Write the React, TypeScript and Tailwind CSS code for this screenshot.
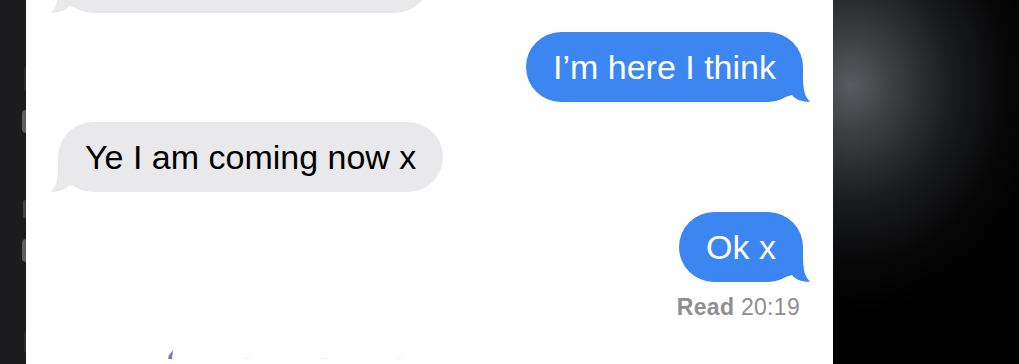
import React from "react";

function Tail({ side, color }: { side: "left" | "right"; color: string }) {
  return (
    <svg
      width="26"
      height="36"
      viewBox="0 0 26 36"
      className={
        side === "right"
          ? "absolute bottom-0 right-[-10px]"
          : "absolute bottom-0 left-[-10px] -scale-x-100"
      }
    >
      <path
        d="M0 0 L16 0 L16 10 C16 24 18 32 23.5 35.6 C18 36.3 9 34.5 5 29 L0 30.5 Z"
        fill={color}
      />
    </svg>
  );
}

function Incoming({ text, className = "" }: { text: string; className?: string }) {
  return (
    <div className={"relative self-start h-[70px] rounded-[35px] bg-[#e9e9eb] flex items-center pl-[27px] pr-[27px] " + className}>
      <span className="text-[34px] text-black leading-none">{text}</span>
      <Tail side="left" color="#e9e9eb" />
    </div>
  );
}

function Outgoing({ text, className = "" }: { text: string; className?: string }) {
  return (
    <div className={"relative self-end h-[70px] rounded-[35px] bg-[#3c86f1] flex items-center px-[27px] " + className}>
      <span className="text-[34px] text-white leading-none">{text}</span>
      <Tail side="right" color="#3c86f1" />
    </div>
  );
}

export default function App() {
  return (
    <div className="w-[1019px] h-[364px] flex overflow-hidden font-['Liberation_Sans',Arial,sans-serif]">
      <div className="w-[26px] h-full bg-[#1c1c1e] flex flex-col items-end">
        <div className="mt-[67px] w-[2px] h-[24px] rounded-full bg-[#2e2e30]" />
        <div className="mt-[19px] w-[4px] h-[23px] rounded-l-full bg-[#5f5f62]" />
        <div className="mt-[67px] w-[3px] h-[18px] rounded-full bg-[#444446]" />
        <div className="mt-[21px] w-[4px] h-[23px] rounded-l-full bg-[#5f5f62]" />
        <div className="mt-[70px] w-[2px] h-[20px] rounded-full bg-[#2e2e30]" />
      </div>

      <div className="w-[807px] h-full bg-white flex flex-col pl-[32px] pr-[30px]">
        <Incoming text="" className="mt-[-57px] w-[372px]" />
        <Outgoing text="I’m here I think" className="mt-[19px]" />
        <Incoming text="Ye I am coming now x" className="mt-[20px]" />
        <Outgoing text="Ok x" className="mt-[20px]" />
        <div className="self-end mt-[12px] mr-[3px] text-[23px] leading-[27px] text-[#8e8e93] tracking-[0.3px]">
          <span className="font-bold">Read</span> 20:19
        </div>
        <div className="mt-[29px] ml-[110px] flex items-end gap-[70px]">
          <svg width="6" height="9" viewBox="0 0 6 9">
            <path d="M5 0 L1 5 L0 9 L4 9 Z" fill="#8078c8" />
          </svg>
          <div className="w-[6px] h-[1px] bg-[#f0f0f3]" />
          <div className="w-[6px] h-[1px] bg-[#f2f2f5]" />
          <div className="w-[6px] h-[1px] bg-[#f2f2f5]" />
        </div>
      </div>

      <div className="flex-1 h-full bg-[radial-gradient(ellipse_200px_230px_at_18px_85px,#595c60_0%,#3b3d40_22%,#1b1c1e_50%,#070708_78%,#000_100%)]" />
    </div>
  );
}
